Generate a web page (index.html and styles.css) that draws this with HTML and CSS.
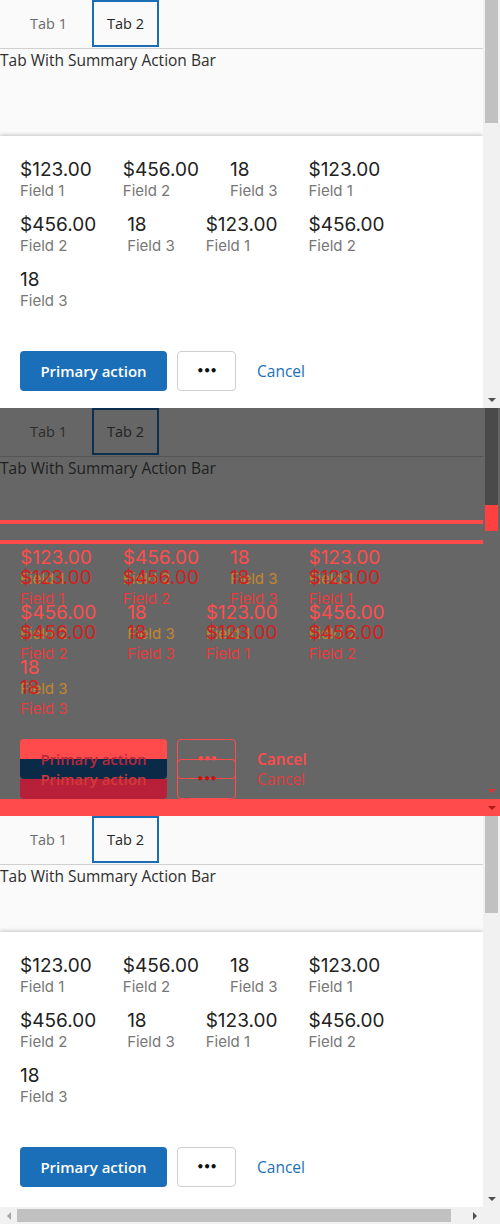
FILE: index.html
```html
<!DOCTYPE html>
<html>
<head>
<meta charset="utf-8">
<link rel="stylesheet" href="styles.css">
</head>
<body>

<!-- Panel 1: expected -->
<section class="panel">
  <div class="main">
    <div class="page page-tall">
      <div class="tabs">
        <div class="tab">Tab 1</div>
        <div class="tab active">Tab 2</div>
      </div>
      <div class="title">Tab With Summary Action Bar</div>
      <div class="fill"></div>
      <div class="card">
        <div class="summary">
          <div class="item"><div class="val">$123.00</div><div class="lab">Field 1</div></div>
          <div class="item"><div class="val">$456.00</div><div class="lab">Field 2</div></div>
          <div class="item"><div class="val">18</div><div class="lab">Field 3</div></div>
          <div class="item"><div class="val">$123.00</div><div class="lab">Field 1</div></div>
          <div class="item"><div class="val">$456.00</div><div class="lab">Field 2</div></div>
          <div class="item"><div class="val">18</div><div class="lab">Field 3</div></div>
          <div class="item"><div class="val">$123.00</div><div class="lab">Field 1</div></div>
          <div class="item"><div class="val">$456.00</div><div class="lab">Field 2</div></div>
          <div class="item"><div class="val">18</div><div class="lab">Field 3</div></div>
        </div>
        <div class="actions">
          <button class="btn-primary">Primary action</button>
          <button class="btn-more"><span class="dots">•••</span></button>
          <button class="btn-link">Cancel</button>
        </div>
      </div>
    </div>
    <div class="vscroll">
      <div class="thumb thumb-long"></div>
      <div class="fill"></div>
      <div class="sbtn"><span class="tri-down"></span></div>
    </div>
  </div>
</section>

<!-- Panel 2: diff -->
<section class="panel diff">
  <div class="main">
    <div class="page page-diff">
      <div class="tabs">
        <div class="tab">Tab 1</div>
        <div class="tab active">Tab 2</div>
      </div>
      <div class="title title-diff">Tab With Summary Action Bar</div>
      <div class="stack">
        <div class="layer layer-a">
          <div class="redline"></div>
          <div class="card card-ghost">
            <div class="summary">
              <div class="item"><div class="val">$123.00</div><div class="lab">Field 1</div></div>
              <div class="item"><div class="val">$456.00</div><div class="lab">Field 2</div></div>
              <div class="item"><div class="val">18</div><div class="lab">Field 3</div></div>
              <div class="item"><div class="val">$123.00</div><div class="lab">Field 1</div></div>
              <div class="item"><div class="val">$456.00</div><div class="lab">Field 2</div></div>
              <div class="item"><div class="val">18</div><div class="lab">Field 3</div></div>
              <div class="item"><div class="val">$123.00</div><div class="lab">Field 1</div></div>
              <div class="item"><div class="val">$456.00</div><div class="lab">Field 2</div></div>
              <div class="item"><div class="val">18</div><div class="lab">Field 3</div></div>
            </div>
            <div class="actions">
              <button class="btn-primary">Primary action</button>
              <button class="btn-more"><span class="dots">•••</span></button>
              <button class="btn-link">Cancel</button>
            </div>
          </div>
        </div>
        <div class="layer layer-b">
          <div class="redline"></div>
          <div class="card card-ghost">
            <div class="summary">
              <div class="item"><div class="val">$123.00</div><div class="lab">Field 1</div></div>
              <div class="item"><div class="val">$456.00</div><div class="lab">Field 2</div></div>
              <div class="item"><div class="val">18</div><div class="lab">Field 3</div></div>
              <div class="item"><div class="val">$123.00</div><div class="lab">Field 1</div></div>
              <div class="item"><div class="val">$456.00</div><div class="lab">Field 2</div></div>
              <div class="item"><div class="val">18</div><div class="lab">Field 3</div></div>
              <div class="item"><div class="val">$123.00</div><div class="lab">Field 1</div></div>
              <div class="item"><div class="val">$456.00</div><div class="lab">Field 2</div></div>
              <div class="item"><div class="val">18</div><div class="lab">Field 3</div></div>
            </div>
            <div class="actions">
              <button class="btn-primary">Primary action</button>
              <button class="btn-more"><span class="dots">•••</span></button>
              <button class="btn-link">Cancel</button>
            </div>
          </div>
        </div>
      </div>
    </div>
    <div class="vscroll vscroll-diff">
      <div class="thumb thumb-short"></div>
      <div class="thumb thumb-red"></div>
      <div class="fill"></div>
      <div class="sbtn"><span class="tri-down tri-red"></span></div>
    </div>
  </div>
  <div class="redbar">
    <div class="fill"></div>
    <div class="sbtn"><span class="tri-down tri-dark"></span></div>
  </div>
</section>

<!-- Panel 3: actual -->
<section class="panel">
  <div class="main">
    <div class="page page-short">
      <div class="tabs">
        <div class="tab">Tab 1</div>
        <div class="tab active">Tab 2</div>
      </div>
      <div class="title">Tab With Summary Action Bar</div>
      <div class="fill"></div>
      <div class="card">
        <div class="summary">
          <div class="item"><div class="val">$123.00</div><div class="lab">Field 1</div></div>
          <div class="item"><div class="val">$456.00</div><div class="lab">Field 2</div></div>
          <div class="item"><div class="val">18</div><div class="lab">Field 3</div></div>
          <div class="item"><div class="val">$123.00</div><div class="lab">Field 1</div></div>
          <div class="item"><div class="val">$456.00</div><div class="lab">Field 2</div></div>
          <div class="item"><div class="val">18</div><div class="lab">Field 3</div></div>
          <div class="item"><div class="val">$123.00</div><div class="lab">Field 1</div></div>
          <div class="item"><div class="val">$456.00</div><div class="lab">Field 2</div></div>
          <div class="item"><div class="val">18</div><div class="lab">Field 3</div></div>
        </div>
        <div class="actions">
          <button class="btn-primary">Primary action</button>
          <button class="btn-more"><span class="dots">•••</span></button>
          <button class="btn-link">Cancel</button>
        </div>
      </div>
    </div>
    <div class="vscroll">
      <div class="thumb thumb-short"></div>
      <div class="fill"></div>
      <div class="sbtn"><span class="tri-down"></span></div>
    </div>
  </div>
  <div class="hscroll">
    <div class="sbtn"><span class="tri-left"></span></div>
    <div class="htrack"><div class="hthumb"></div></div>
    <div class="sbtn"><span class="tri-right"></span></div>
    <div class="corner"></div>
  </div>
</section>

</body>
</html>
```

FILE: styles.css
```css
* { box-sizing: border-box; }
html, body { margin: 0; padding: 0; }
body {
  width: 500px;
  height: 1224px;
  overflow: hidden;
  background: #fff;
  font-family: "Open Sans", "Noto Sans", sans-serif;
}
button {
  font-family: inherit;
  margin: 0;
  padding: 0;
  cursor: pointer;
}

.panel {
  height: 408px;
  overflow: hidden;
  display: flex;
  flex-direction: column;
}
.main {
  flex: 1;
  min-height: 0;
  display: flex;
  overflow: hidden;
}
.page {
  width: 483px;
  flex-shrink: 0;
  display: flex;
  flex-direction: column;
  background: #fafafa;
}
.page-tall { height: 411px; }
.page-short { height: 391px; }
.fill { flex: 1; }

/* tabs */
.tabs {
  height: 49px;
  flex-shrink: 0;
  border-bottom: 1px solid #d0d0d0;
  display: flex;
  gap: 10px;
  padding-left: 15px;
}
.tab {
  height: 47px;
  padding: 0 13px;
  border: 2px solid transparent;
  display: flex;
  align-items: center;
  font-size: 14.5px;
  color: #6b6b6b;
}
.tab.active {
  border-color: #1b6db5;
  color: #252525;
}
.title {
  font-size: 15.5px;
  line-height: 22px;
  color: #2e2e2e;
  flex-shrink: 0;
}

/* summary card */
.card {
  flex-shrink: 0;
  background: #fff;
  box-shadow: 0 -1px 4px rgba(0, 0, 0, 0.22);
  padding: 22px 20px 20px;
}
.summary {
  display: flex;
  flex-wrap: wrap;
  row-gap: 13px;
}
.item { margin-right: 31px; }
.val {
  font-family: Inter, sans-serif;
  font-size: 19px;
  line-height: 24px;
  color: #222;
}
.lab {
  font-family: Inter, sans-serif;
  font-size: 15px;
  line-height: 18px;
  color: #777;
}
.actions {
  margin-top: 41px;
  height: 40px;
  display: flex;
  align-items: center;
}
.btn-primary {
  width: 147px;
  height: 40px;
  border: none;
  border-radius: 4px;
  background: #1b6fb8;
  color: #fff;
  font-size: 15px;
  font-weight: 600;
}
.btn-more {
  width: 59px;
  height: 40px;
  margin-left: 10px;
  border: 1px solid #cfcfcf;
  border-radius: 4px;
  background: #fff;
  color: #111;
  display: flex;
  align-items: center;
  justify-content: center;
}
.dots {
  font-family: "DejaVu Sans", sans-serif;
  font-size: 12px;
  letter-spacing: -1px;
  font-weight: bold;
}
.btn-link {
  margin-left: 21px;
  border: none;
  background: none;
  color: #1b6fb8;
  font-size: 15.5px;
}

/* scrollbars */
.vscroll {
  width: 17px;
  flex-shrink: 0;
  background: #f1f1f1;
  display: flex;
  flex-direction: column;
}
.thumb {
  margin: 0 2px;
  background: #c1c1c1;
  flex-shrink: 0;
}
.thumb-long { height: 123px; }
.thumb-short { height: 97px; }
.sbtn {
  width: 17px;
  height: 17px;
  flex-shrink: 0;
  display: flex;
  align-items: center;
  justify-content: center;
}
.tri-down {
  width: 0; height: 0;
  border-left: 4px solid transparent;
  border-right: 4px solid transparent;
  border-top: 4px solid #505050;
}
.tri-left {
  width: 0; height: 0;
  border-top: 4px solid transparent;
  border-bottom: 4px solid transparent;
  border-right: 4px solid #a3a3a3;
}
.tri-right {
  width: 0; height: 0;
  border-top: 4px solid transparent;
  border-bottom: 4px solid transparent;
  border-left: 4px solid #505050;
}
.hscroll {
  height: 17px;
  flex-shrink: 0;
  display: flex;
  background: #f1f1f1;
}
.htrack {
  flex: 1;
  display: flex;
  align-items: center;
}
.hthumb {
  width: 434px;
  height: 13px;
  background: #c1c1c1;
}
.corner {
  width: 17px;
  background: #f1f1f1;
}

/* diff panel */
.diff { background: #666; }
.diff .page { background: #666; height: 391px; overflow: hidden; }
.diff .tabs { border-bottom-color: #555; }
.diff .tab { color: #2c2c2c; }
.diff .tab.active { border-color: #0d2f4f; color: #222; }
.title-diff { height: 63px; color: #1f1f1f; }
.stack {
  display: grid;
  flex-shrink: 0;
}
.layer { grid-area: 1 / 1; }
.layer-b { margin-top: 20px; }
.redline { height: 4px; background: #ff4b4b; }
.card-ghost {
  background: transparent;
  box-shadow: none;
}
.layer-a .val { color: #ff4d4d; }
.layer-a .lab { color: #c4862e; }
.layer-b .val { color: #d21f1f; }
.layer-b .lab { color: #e63c3c; }
.layer-a .btn-primary {
  background: linear-gradient(#ff4b4b 50%, #0b2a48 50%);
  color: #b8283c;
}
.layer-b .btn-primary {
  background: linear-gradient(transparent 50%, #b8203a 50%);
  color: #d23a3a;
}
.card-ghost .btn-more {
  background: transparent;
  border-color: #ff4b4b;
}
.layer-a .dots { color: #ff4b4b; }
.layer-b .dots { color: #c01515; }
.layer-a .btn-link { color: #ff4b4b; font-weight: 600; }
.layer-b .btn-link { color: #e23c3c; }

.vscroll-diff { background: #666; }
.vscroll-diff .thumb-short { background: #4a4a4a; }
.thumb-red { height: 26px; background: #ff4040; }
.tri-red { border-top-color: #e03030; }
.redbar {
  height: 17px;
  flex-shrink: 0;
  display: flex;
  background: #ff4b4b;
}
.tri-dark { border-top-color: #b01818; }
```
